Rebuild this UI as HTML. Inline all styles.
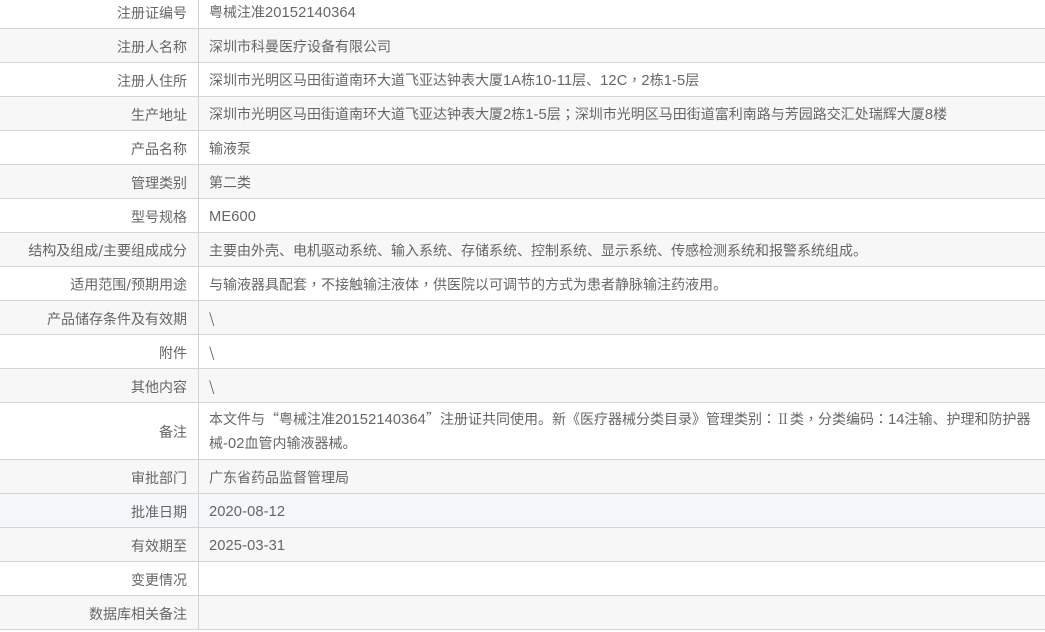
<!DOCTYPE html>
<html>
<head>
<meta charset="utf-8">
<title>注册证</title>
<style>
html,body{margin:0;padding:0;width:1045px;height:632px;overflow:hidden;background:#fff}
body{position:relative;font-family:"Noto Sans CJK SC",sans-serif;font-size:14px;color:#666}
.r{position:absolute;left:0;width:1045px;border-bottom:1px solid #d4d4d4;box-sizing:border-box;background:#fff}
.g{background:#f7f7f7}
.b{background:#f5f6fa}
.l{position:absolute;left:0;top:0;bottom:0;width:198px;border-right:1px solid #d4d4d4;box-sizing:content-box}
.l span.t{position:absolute;right:11px;top:50%;margin-top:1px;transform:translateY(-50%);white-space:nowrap;line-height:20px}
.v{position:absolute;left:209px;right:0;top:50%;margin-top:1px;transform:translateY(-50%);line-height:23px;white-space:nowrap}
.n{font-family:"Liberation Sans",sans-serif;font-size:14.7px;letter-spacing:.1px}
.p{font-family:"Noto Sans CJK TC",sans-serif}
.s{font-family:"DejaVu Sans",sans-serif}
.m{font-family:"Noto Serif CJK SC",serif}
</style>
</head>
<body>
<div class="r" style="top:-5px;height:34px"><div class="l"><span class="t">注册证编号</span></div><div class="v">粤械注准<span class="n">20152140364</span></div></div>
<div class="r g" style="top:29px;height:34px"><div class="l"><span class="t">注册人名称</span></div><div class="v">深圳市科曼医疗设备有限公司</div></div>
<div class="r" style="top:63px;height:34px"><div class="l"><span class="t">注册人住所</span></div><div class="v">深圳市光明区马田街道南环大道飞亚达钟表大厦<span class="n">1A</span>栋<span class="n">10-11</span>层、<span class="n">12C</span><span class="p" lang="zh-TW">，</span><span class="n">2</span>栋<span class="n">1-5</span>层</div></div>
<div class="r g" style="top:97px;height:34px"><div class="l"><span class="t">生产地址</span></div><div class="v">深圳市光明区马田街道南环大道飞亚达钟表大厦<span class="n">2</span>栋<span class="n">1-5</span>层<span class="p" lang="zh-TW">；</span>深圳市光明区马田街道富利南路与芳园路交汇处瑞辉大厦<span class="n">8</span>楼</div></div>
<div class="r" style="top:131px;height:34px"><div class="l"><span class="t">产品名称</span></div><div class="v">输液泵</div></div>
<div class="r g" style="top:165px;height:34px"><div class="l"><span class="t">管理类别</span></div><div class="v">第二类</div></div>
<div class="r" style="top:199px;height:34px"><div class="l"><span class="t">型号规格</span></div><div class="v"><span class="n">ME600</span></div></div>
<div class="r g" style="top:233px;height:34px"><div class="l"><span class="t">结构及组成<span class="s">/</span>主要组成成分</span></div><div class="v">主要由外壳、电机驱动系统、输入系统、存储系统、控制系统、显示系统、传感检测系统和报警系统组成。</div></div>
<div class="r" style="top:267px;height:34px"><div class="l"><span class="t">适用范围<span class="s">/</span>预期用途</span></div><div class="v">与输液器具配套<span class="p" lang="zh-TW">，</span>不接触输注液体<span class="p" lang="zh-TW">，</span>供医院以可调节的方式为患者静脉输注药液用。</div></div>
<div class="r g" style="top:301px;height:34px"><div class="l"><span class="t">产品储存条件及有效期</span></div><div class="v">\</div></div>
<div class="r" style="top:335px;height:34px"><div class="l"><span class="t">附件</span></div><div class="v">\</div></div>
<div class="r g" style="top:369px;height:34px"><div class="l"><span class="t">其他内容</span></div><div class="v">\</div></div>
<div class="r" style="top:403px;height:57px"><div class="l"><span class="t">备注</span></div><div class="v">本文件与“粤械注准<span class="n">20152140364</span>”注册证共同使用。新《医疗器械分类目录》管理类别<span class="p" lang="zh-TW">：</span><span class="m">Ⅱ</span>类<span class="p" lang="zh-TW">，</span>分类编码<span class="p" lang="zh-TW">：</span><span class="n">14</span>注输、护理和防护器<br>械<span class="n">-02</span>血管内输液器械。</div></div>
<div class="r g" style="top:460px;height:34px"><div class="l"><span class="t">审批部门</span></div><div class="v">广东省药品监督管理局</div></div>
<div class="r b" style="top:494px;height:34px"><div class="l"><span class="t">批准日期</span></div><div class="v"><span class="n">2020-08-12</span></div></div>
<div class="r g" style="top:528px;height:34px"><div class="l"><span class="t">有效期至</span></div><div class="v"><span class="n">2025-03-31</span></div></div>
<div class="r" style="top:562px;height:34px"><div class="l"><span class="t">变更情况</span></div></div>
<div class="r g" style="top:596px;height:34px"><div class="l"><span class="t">数据库相关备注</span></div></div>
</body>
</html>
